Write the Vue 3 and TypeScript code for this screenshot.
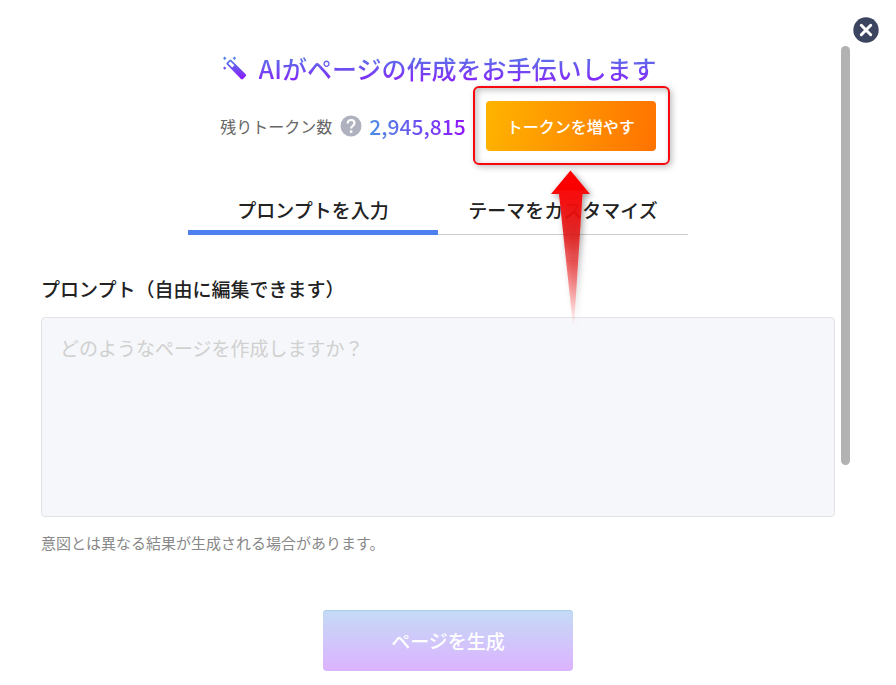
<script setup lang="ts">
import { ref } from 'vue'

type TabId = 'prompt' | 'theme'

const tabs: { id: TabId; label: string }[] = [
  { id: 'prompt', label: 'プロンプトを入力' },
  { id: 'theme', label: 'テーマをカスタマイズ' },
]
const activeTab = ref<TabId>('prompt')
const tokens = ref(2945815)
const prompt = ref('')
</script>

<template>
  <main class="dialog">
    <button class="close" type="button" aria-label="閉じる">
      <svg viewBox="0 0 26 26" width="26" height="26" aria-hidden="true">
        <circle cx="13" cy="13" r="12.7" fill="#3b4560" />
        <path d="M8.3 8.3 17.7 17.7M17.7 8.3 8.3 17.7" stroke="#fff" stroke-width="3" stroke-linecap="round" />
      </svg>
    </button>

    <div class="body">
      <div class="content">
        <h1 class="title">
          <svg viewBox="0 0 24 24" width="24" height="24" aria-hidden="true">
            <defs>
              <linearGradient id="wand" gradientUnits="userSpaceOnUse" x1="0" y1="0" x2="0" y2="24">
                <stop offset="0" stop-color="#4a90e2" />
                <stop offset="1" stop-color="#9013fe" />
              </linearGradient>
            </defs>
            <g fill="url(#wand)">
              <path d="M1.7.6 3.4 2.3 1.7 4 0 2.3ZM11.4.6 13.1 2.3 11.4 4 9.7 2.3ZM1.7 10.4 3.4 12.1 1.7 13.8 0 12.1Z" />
              <path
                fill-rule="evenodd"
                d="M3.9 6.4 6.4 3.9Q7.4 3.1 8.4 4L22.7 18.3Q23.6 19.3 22.7 20.3L20 23Q19 23.8 18 23L3.8 8.5Q2.9 7.4 3.9 6.4ZM5.3 7.4 9.2 11.4 11.3 9.3 7.4 5.4Z"
              />
            </g>
          </svg>
          <span class="title-text">AIがページの作成をお手伝いします</span>
        </h1>

        <div class="tokens">
          <span class="tokens-label">残りトークン数</span>
          <button class="help" type="button" aria-label="ヘルプ">
            <svg viewBox="0 0 22 22" width="22" height="22" aria-hidden="true">
              <circle cx="11" cy="11" r="10.5" fill="#afb1be" />
              <path d="M7.6 8.5C7.7 6.3 9.1 5 11.1 5S14.5 6.3 14.5 8.1C14.5 10.6 11.1 10.9 11.1 13.6" fill="none" stroke="#fff" stroke-width="2.2" />
              <circle cx="11.1" cy="16.7" r="1.4" fill="#fff" />
            </svg>
          </button>
          <strong class="count">{{ tokens.toLocaleString('en-US') }}</strong>
          <div class="increase-wrap">
            <button class="increase" type="button">トークンを増やす</button>
            <div class="callout" />
            <svg class="arrow" viewBox="0 0 60 170" width="60" height="170" aria-hidden="true">
              <defs>
                <linearGradient id="arrow-fill" gradientUnits="userSpaceOnUse" x1="0" y1="10" x2="0" y2="166">
                  <stop offset="0" stop-color="#f00" />
                  <stop offset="0.16" stop-color="#f70808" />
                  <stop offset="0.42" stop-color="#e00e0e" stop-opacity="0.84" />
                  <stop offset="1" stop-color="#f00" stop-opacity="0" />
                </linearGradient>
                <filter id="arrow-shadow" x="-50%" y="-10%" width="200%" height="120%">
                  <feDropShadow dx="2" dy="2" stdDeviation="3" flood-color="#000" flood-opacity="0.4" />
                </filter>
              </defs>
              <path d="M29.5 10.5 49 34H41.5L33 166H32L18 34H10Z" fill="url(#arrow-fill)" filter="url(#arrow-shadow)" />
            </svg>
          </div>
        </div>

        <div class="tabs" role="tablist">
          <button
            v-for="tab in tabs"
            :key="tab.id"
            class="tab"
            :class="{ active: tab.id === activeTab }"
            type="button"
            role="tab"
            :aria-selected="tab.id === activeTab"
            @click="activeTab = tab.id"
          >
            {{ tab.label }}
          </button>
        </div>

        <label class="prompt-label" for="prompt">プロンプト（自由に編集できます）</label>
        <textarea id="prompt" v-model="prompt" class="prompt" placeholder="どのようなページを作成しますか？" />
        <p class="note">意図とは異なる結果が生成される場合があります。</p>
      </div>
      <div class="scrollbar" />
    </div>

    <footer class="footer">
      <button class="generate" type="button">ページを生成</button>
    </footer>
  </main>
</template>

<style>
body {
  margin: 0;
  background: #fff;
}
</style>

<style scoped>
.dialog {
  position: relative;
  box-sizing: border-box;
  padding: 46px 46px 14px 41px;
  color: #222;
  font-family: 'Noto Sans CJK JP', sans-serif;
  font-size: 19px;
  line-height: 28px;
}

button {
  padding: 0;
  border: 0;
  background: none;
  font: inherit;
  color: inherit;
  cursor: pointer;
}

svg {
  display: block;
}

.close {
  position: absolute;
  top: 17px;
  right: 17px;
}

.body {
  display: flex;
  gap: 6px;
}

.content {
  flex: 1;
  min-width: 0;
}

.scrollbar {
  width: 9px;
  height: 419px;
  border-radius: 5px;
  background: #b2b2b2;
}

.title {
  display: flex;
  align-items: center;
  justify-content: center;
  gap: 12px;
  margin: 3px 0 0 3px;
  font-size: 25px;
  font-weight: 500;
  line-height: 38px;
}

.title-text {
  background: linear-gradient(#4a90e2, #9013fe);
  background-clip: text;
  color: transparent;
}

.tokens {
  display: flex;
  align-items: center;
  justify-content: center;
  margin-top: 14px;
}

.tokens-label {
  color: #666;
  font-size: 16px;
}

.help {
  margin: 0 7px 0 8px;
}

.count {
  margin-right: 20px;
  background: linear-gradient(90deg, #4a90e2, #9013fe);
  background-clip: text;
  color: transparent;
  font-size: 21px;
  font-weight: 500;
  line-height: 32px;
}

.increase-wrap {
  position: relative;
}

.increase {
  width: 170px;
  height: 50px;
  border-radius: 4px;
  background: linear-gradient(100deg, #ffb400, #ff7200);
  color: #fff;
  font-size: 16px;
  font-weight: 500;
}

.callout {
  position: absolute;
  inset: -15px -14px -14px -13px;
  border: 2px solid #f60a10;
  border-radius: 6px;
  box-shadow: 2px 2px 6px rgba(0, 0, 0, 0.25), inset 2px 2px 6px rgba(0, 0, 0, 0.25);
  pointer-events: none;
}

.arrow {
  position: absolute;
  top: 59px;
  left: 55px;
  pointer-events: none;
}

.tabs {
  display: grid;
  grid-template-columns: 1fr 1fr;
  max-width: 500px;
  margin: 34px auto 0;
}

.tab {
  height: 50px;
  border-bottom: 1px solid #ccc;
  font-weight: 500;
}

.tab.active {
  padding-top: 4px;
  border-bottom: 5px solid #4f80f0;
}

.prompt-label {
  display: block;
  margin-top: 40px;
  font-weight: 500;
}

.prompt {
  display: block;
  box-sizing: border-box;
  width: 100%;
  height: 200px;
  margin-top: 14px;
  padding: 16px 18px;
  border: 1px solid #e2e3e5;
  border-radius: 4px;
  background: #f6f7fa;
  color: #222;
  font: inherit;
  resize: none;
}

.prompt::placeholder {
  color: #d0d0d0;
}

.note {
  margin: 14px 0 0;
  color: #888;
  font-size: 15px;
  line-height: 24px;
}

.footer {
  display: flex;
  justify-content: center;
  margin: 55px -5px 0 0;
}

.generate {
  width: 250px;
  height: 61px;
  border-radius: 4px;
  background: linear-gradient(#c4dbf6, #dcb3ff);
  box-shadow: inset 0 1px #aaccef;
  color: #fff;
  font-weight: 500;
}
</style>
